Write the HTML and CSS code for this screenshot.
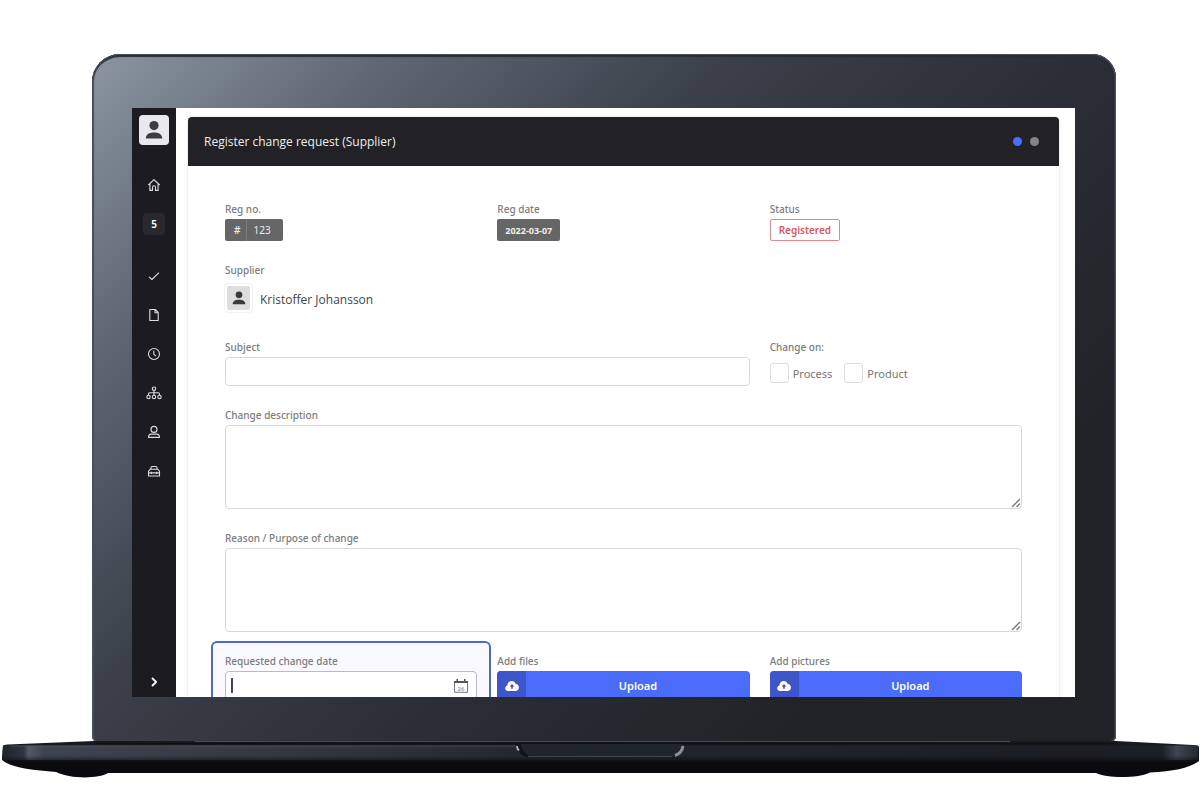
FILE: index.html
```html
<!DOCTYPE html>
<html lang="en">
<head>
<meta charset="utf-8">
<meta name="viewport" content="width=device-width, initial-scale=1">
<title>Register change request (Supplier)</title>
<link rel="stylesheet" href="styles.css">
</head>
<body>
<div class="laptop">
  <div class="lid">
    <div class="screen">
      <nav class="sidebar" aria-label="Main">
        <a class="profile" href="#" aria-label="Profile"><svg viewBox="0 0 20 20" width="20" height="20"><circle cx="10" cy="5.6" r="4.6" fill="#3d3d40"/><path d="M1.8 18.6C1.8 14.4 4.8 12.4 10 12.4s8.200 2 8.200 6.200z" fill="#3d3d40"/></svg></a>
        <a class="item" href="#" aria-label="Home"><svg class="icon" viewBox="0 0 14 14"><path d="M1.300 7 7 1.600 12.700 7M2.900 5.800v6.600h2.600V9.200a1.500 1.500 0 0 1 3 0v3.200h2.600V5.800"/></svg></a>
        <a class="item" href="#"><span class="count">5</span></a>
        <a class="item item-spaced" href="#" aria-label="Tasks"><svg class="icon" viewBox="0 0 14 14"><path d="M2 7.800 4.900 10.500 12 3.700"/></svg></a>
        <a class="item" href="#" aria-label="Documents"><svg class="icon" viewBox="0 0 14 14"><path d="M2.800 1.500h5.400l3 3v8H2.800zM8 1.700v3h3"/></svg></a>
        <a class="item" href="#" aria-label="History"><svg class="icon" viewBox="0 0 14 14"><circle cx="7" cy="7" r="5.500"/><path d="M6.800 3.800v3.400l2 1.900"/></svg></a>
        <a class="item" href="#" aria-label="Organisation"><svg class="icon icon-wide" viewBox="0 0 16 14"><circle cx="8" cy="2.700" r="1.700"/><circle cx="2.500" cy="11" r="1.700"/><circle cx="8" cy="11" r="1.700"/><circle cx="13.500" cy="11" r="1.700"/><path d="M8 4.400v4.900M2.500 9.300V8.100q0-1.300 1.300-1.300h8.400q1.300 0 1.300 1.300v1.200"/></svg></a>
        <a class="item" href="#" aria-label="Users"><svg class="icon" viewBox="0 0 14 14"><circle cx="7" cy="4.400" r="3"/><path d="M1.500 12.400c0-2 .9-3.300 2.800-3.300h5.400c1.900 0 2.800 1.300 2.800 3.300z"/></svg></a>
        <a class="item" href="#" aria-label="Toolbox"><svg class="icon" viewBox="0 0 14 14"><path d="M4 5.200V3.700q0-1.200 1.200-1.200h3.600q1.200 0 1.200 1.200v1.500M1.500 12V7.300l1.800-2.100h7.400l1.800 2.100V12zM1.500 8.900h11M4.400 7.800v2.100M9.600 7.800v2.100"/></svg></a>
        <button class="expand" type="button" aria-label="Expand menu"><svg class="icon icon-bold" viewBox="0 0 14 14"><path d="M5 3l4.200 4L5 11"/></svg></button>
      </nav>
      <main class="page">
        <section class="card">
          <header class="card-head">
            <h1>Register change request (Supplier)</h1>
            <div class="steps"><span class="dot dot-on"></span><span class="dot"></span></div>
          </header>
          <form class="form">
            <div class="field">
              <span class="label">Reg no.</span>
              <span class="tag tag-split"><b>#</b><span>123</span></span>
            </div>
            <div class="field">
              <span class="label">Reg date</span>
              <span class="tag tag-date">2022-03-07</span>
            </div>
            <div class="field">
              <span class="label">Status</span>
              <span class="tag tag-status">Registered</span>
            </div>
            <div class="field full">
              <span class="label">Supplier</span>
              <div class="person">
                <span class="avatar"><svg viewBox="0 0 20 20" width="14" height="14"><circle cx="10" cy="5.400" r="4.800" fill="#3b3b3b"/><path d="M1 18.800C1 14.200 4.500 12.400 10 12.400s9 1.800 9 6.400z" fill="#3b3b3b"/></svg></span>
                <span>Kristoffer Johansson</span>
              </div>
            </div>
            <div class="field wide">
              <label class="label" for="subject">Subject</label>
              <input class="control" id="subject" type="text">
            </div>
            <fieldset class="field">
              <legend class="label">Change on:</legend>
              <div class="checks">
                <label><input type="checkbox">Process</label>
                <label><input type="checkbox">Product</label>
              </div>
            </fieldset>
            <div class="field full">
              <label class="label" for="description">Change description</label>
              <div class="area"><textarea class="control" id="description"></textarea><svg class="grip" viewBox="0 0 10 10"><path d="M1 9 9 1M5.500 9 9 5.500"/></svg></div>
            </div>
            <div class="field full">
              <label class="label" for="reason">Reason / Purpose of change</label>
              <div class="area"><textarea class="control" id="reason"></textarea><svg class="grip" viewBox="0 0 10 10"><path d="M1 9 9 1M5.500 9 9 5.500"/></svg></div>
            </div>
            <div class="field active">
              <label class="label" for="date">Requested change date</label>
              <div class="date">
                <input class="control" id="date" type="text">
                <span class="caret"></span>
                <svg class="calendar" viewBox="0 0 14 14"><path d="M.5 2.500h13v10.800H.5z" fill="none" stroke="#777"/><path d="M0 2h14v2H0zM2.500 0H4v3H2.500zM10 0h1.500v3H10z" fill="#555"/><text x="7" y="11.500" text-anchor="middle">26</text></svg>
              </div>
            </div>
            <div class="field">
              <span class="label">Add files</span>
              <button class="upload" type="button"><span class="upload-icon"><svg viewBox="0 0 14 12" width="14" height="12"><path d="M3.200 11C1.400 11 .2 9.900.2 8.300c0-1.400.9-2.400 2.200-2.700C2.500 2.900 4.300 1 6.700 1c2 0 3.400 1.100 4 2.900 1.900.2 3.200 1.600 3.200 3.500C13.900 9.500 12.500 11 10.500 11z" fill="#fff"/><path d="M7 3.900 9.300 6.500H7.800v2.300H6.200V6.500H4.700z" fill="#3a4fc4"/></svg></span><span class="upload-text">Upload</span></button>
            </div>
            <div class="field">
              <span class="label">Add pictures</span>
              <button class="upload" type="button"><span class="upload-icon"><svg viewBox="0 0 14 12" width="14" height="12"><path d="M3.200 11C1.400 11 .2 9.900.2 8.300c0-1.400.9-2.400 2.200-2.700C2.500 2.900 4.300 1 6.700 1c2 0 3.400 1.100 4 2.900 1.900.2 3.200 1.600 3.200 3.500C13.900 9.500 12.500 11 10.500 11z" fill="#fff"/><path d="M7 3.900 9.300 6.500H7.800v2.300H6.200V6.500H4.700z" fill="#3a4fc4"/></svg></span><span class="upload-text">Upload</span></button>
            </div>
          </form>
        </section>
      </main>
    </div>
  </div>
  <svg class="base" viewBox="0 0 1200 40" preserveAspectRatio="none" aria-hidden="true">
    <defs>
      <linearGradient id="body" x1="0" x2="0" y1="0" y2="1">
        <stop offset="0" stop-color="#181a20"/><stop offset=".45" stop-color="#14161b"/><stop offset=".6" stop-color="#0b0b0f"/><stop offset="1" stop-color="#0a0a0d"/>
      </linearGradient>
      <linearGradient id="band" x1="0" x2="1" y1="0" y2="0">
        <stop offset="0" stop-color="#20242c"/><stop offset=".018" stop-color="#303540"/><stop offset=".022" stop-color="#555c67"/><stop offset=".035" stop-color="#404651"/><stop offset=".25" stop-color="#333842"/><stop offset=".45" stop-color="#23272f"/><stop offset=".9" stop-color="#1c1e24"/><stop offset=".97" stop-color="#1d2027"/><stop offset=".982" stop-color="#414854"/><stop offset="1" stop-color="#252931"/>
      </linearGradient>
      <linearGradient id="shade" x1="0" x2="0" y1="0" y2="1">
        <stop offset="0" stop-color="#0b0b0f" stop-opacity="0"/><stop offset=".7" stop-color="#0b0b0f" stop-opacity=".05"/><stop offset="1" stop-color="#0b0b0f" stop-opacity=".5"/>
      </linearGradient>
    </defs>
    <path d="M3 8Q3 7 8 6.500L94 3H1116L1193 7Q1199 7.500 1199 9V23Q1186 33 1150 34.500C1140 40 1108 41 1096 35H108C98 41 70 41 56 34 32 32 12 30 2 22z" fill="url(#body)"/>
    <path d="M3 7.500H1198V22H2z" fill="url(#band)"/>
    <path d="M2 7.500H1199V22H2z" fill="url(#shade)"/>
    <path d="M195 3.500H1010" stroke="#454a52" stroke-width="1"/>
    <path d="M94 5.500H1116" stroke="#0b0c10" stroke-width="1.500" opacity=".7"/>
    <path d="M10 8H516" stroke="#565c66" stroke-width="1" opacity=".6"/>
    <path d="M516 6H684Q683 19 670 19H531Q518 19 516 6z" fill="#20242b"/>
    <path d="M516 6Q518 19 531 19 522 15 521 6z" fill="#111318"/>
    <path d="M528 18.500H672" stroke="#3d424a" stroke-width="1"/>
    <path d="M517 8q0 3 2 4.500" fill="none" stroke="#b9bdc3" stroke-width="1.800"/>
    <path d="M683 8q-1 7-8 9.500" fill="none" stroke="#8b9098" stroke-width="3"/>
  </svg>
</div>
</body>
</html>
```
FILE: styles.css
```css
* { box-sizing: border-box; }

body {
  margin: 0;
  background: #fff;
  color: #444;
  font-family: "Noto Sans", "Open Sans", sans-serif;
  font-size: 12px;
}

input, textarea, button { font: inherit; }

.laptop { padding-top: 54px; }

.lid {
  margin: 0 84px 0 92px;
  padding: 54px 41px 45px 40px;
  border-radius: 28px 24px 6px 6px;
  background: linear-gradient(135deg, #8c96a3 0%, #7a8390 7%, #5f6673 18%, #3a3f49 38%, #2b2e36 58%, #212327 80%, #202226 100%);
  box-shadow: inset 0 0 0 1px #4b4f58, inset 0 3px 1px #2b2e36, inset 2px 0 1px #474c56, inset -2px 0 1px #353a44;
}

.screen {
  display: flex;
  height: calc(100vh - 204px);
  overflow: hidden;
  background: #fff;
}

/* Sidebar */

.sidebar {
  display: flex;
  flex: none;
  flex-direction: column;
  align-items: center;
  width: 44px;
  padding: 7px 0 3px;
  background: #1c1b22;
}

.profile {
  display: grid;
  flex: none;
  place-items: center;
  width: 30px;
  height: 30px;
  margin-bottom: 20px;
  border-radius: 4px;
  background: #e9e8ee;
}

.item {
  display: grid;
  flex: none;
  place-items: center;
  width: 100%;
  height: 39px;
  color: #fff;
  text-decoration: none;
}

.item-spaced { margin-top: 13px; }

.count {
  width: 22px;
  border-radius: 4px;
  background: #28282e;
  font-size: 10px;
  font-weight: 600;
  line-height: 22px;
  text-align: center;
}

.icon {
  width: 14px;
  height: 14px;
  fill: none;
  stroke: #dcdce0;
  stroke-linejoin: round;
  stroke-width: 1.1;
}

.icon-wide { width: 16px; }
.icon-bold { stroke: #fff; stroke-width: 1.8; }

.expand {
  display: grid;
  place-items: center;
  width: 100%;
  height: 24px;
  margin-top: auto;
  padding: 0;
  border: 0;
  background: none;
}

/* Card */

.page {
  flex: 1;
  min-width: 0;
  padding: 9px 16px 0 12px;
}

.card {
  min-height: 100%;
  border-radius: 5px;
  box-shadow: 0 0 0 1px #f1f1f1, 0 0 5px #eee;
}

.card-head {
  display: flex;
  align-items: center;
  justify-content: space-between;
  height: 49px;
  padding: 0 20px 0 16px;
  border-radius: 4px 4px 0 0;
  background: #222125;
}

h1 {
  margin: 0;
  color: #eee;
  font-family: "Open Sans", "Noto Sans", sans-serif;
  font-size: 12px;
  font-weight: 500;
}

.steps { display: flex; gap: 8px; }

.dot {
  width: 9px;
  height: 9px;
  border-radius: 50%;
  background: #858585;
}

.dot-on { background: #4b6dfb; }

/* Form */

.form {
  display: grid;
  grid-template-columns: repeat(3, minmax(0, 1fr));
  gap: 22px 20px;
  padding: 36px 37px 22px;
}

.field {
  min-width: 0;
  margin: 0;
  padding: 0;
  border: 0;
}

.full { grid-column: 1 / -1; }
.wide { grid-column: span 2; }

.label {
  display: block;
  margin-bottom: 3px;
  padding: 0;
  color: #7c7c7c;
  font-size: 10px;
  font-weight: 500;
  line-height: 14px;
}

.tag {
  display: flex;
  align-items: center;
  width: fit-content;
  height: 22px;
  border-radius: 2px;
  background: #666;
  color: #eee;
}

.tag-split b {
  padding: 0 6px 0 9px;
  border-right: 1px solid #7c7c7c;
  font-size: 10px;
  font-weight: 500;
  line-height: 22px;
}

.tag-split span { padding: 0 12px 0 6px; font-size: 10px; }

.tag-date {
  padding: 0 8px;
  font-size: 9px;
  font-weight: 700;
}

.tag-status {
  padding: 0 8px;
  border: 1px solid #e08a8c;
  background: #fff;
  color: #d9575b;
  font-size: 10px;
  font-weight: 600;
}

.person {
  display: flex;
  align-items: center;
  gap: 8px;
  padding: 4px 0;
}

.person > span:last-child { font-family: "Open Sans", "Noto Sans", sans-serif; }

.avatar {
  display: grid;
  place-items: center;
  width: 27px;
  height: 28px;
  margin-bottom: 2px;
  border: 2px solid #fff;
  border-radius: 4px;
  background: #dedede;
  box-shadow: 0 0 2px #ccc;
}

.control {
  display: block;
  width: 100%;
  height: 29px;
  margin: 0;
  padding: 4px 8px;
  border: 1px solid #d9d9d9;
  border-radius: 4px;
  outline: 0;
  background: #fff;
}

.area { position: relative; }

.area .control { height: 84px; resize: none; }

.grip {
  position: absolute;
  right: 1px;
  bottom: 1px;
  width: 10px;
  height: 10px;
  fill: none;
  stroke: #777;
  stroke-width: 1.3;
}

.checks {
  display: flex;
  gap: 12px;
  padding-top: 6px;
  color: #777;
  font-size: 11px;
}

.checks label {
  display: flex;
  align-items: center;
  gap: 4px;
}

.checks input {
  width: 19px;
  height: 20px;
  margin: 0;
  border: 1px solid #ddd;
  border-radius: 3px;
  appearance: none;
}

.active {
  margin: -13px -14px;
  padding: 11px 12px;
  border: 2px solid #4f68cf;
  border-radius: 6px;
  background: #f9f9ff;
}

.date { position: relative; }

.date .control { border-color: #b5b8da; }

.caret {
  position: absolute;
  top: 7px;
  left: 6px;
  width: 2px;
  height: 15px;
  background: #444;
}

.calendar {
  position: absolute;
  top: 8px;
  right: 9px;
  width: 14px;
  height: 14px;
}

.calendar text { fill: #777; font-size: 6px; }

.upload {
  display: flex;
  width: 100%;
  height: 29px;
  padding: 0;
  overflow: hidden;
  border: 0;
  border-radius: 4px;
  background: #4b6bfb;
  color: #fff;
  font-size: 11px;
  font-weight: 600;
  line-height: 29px;
}

.upload-icon {
  display: grid;
  place-items: center;
  width: 29px;
  height: 29px;
  background: #3f55ca;
}

.upload-text { flex: 1; }

.base {
  display: block;
  position: relative;
  width: 100%;
  height: 40px;
  margin-top: -4px;
}
```
